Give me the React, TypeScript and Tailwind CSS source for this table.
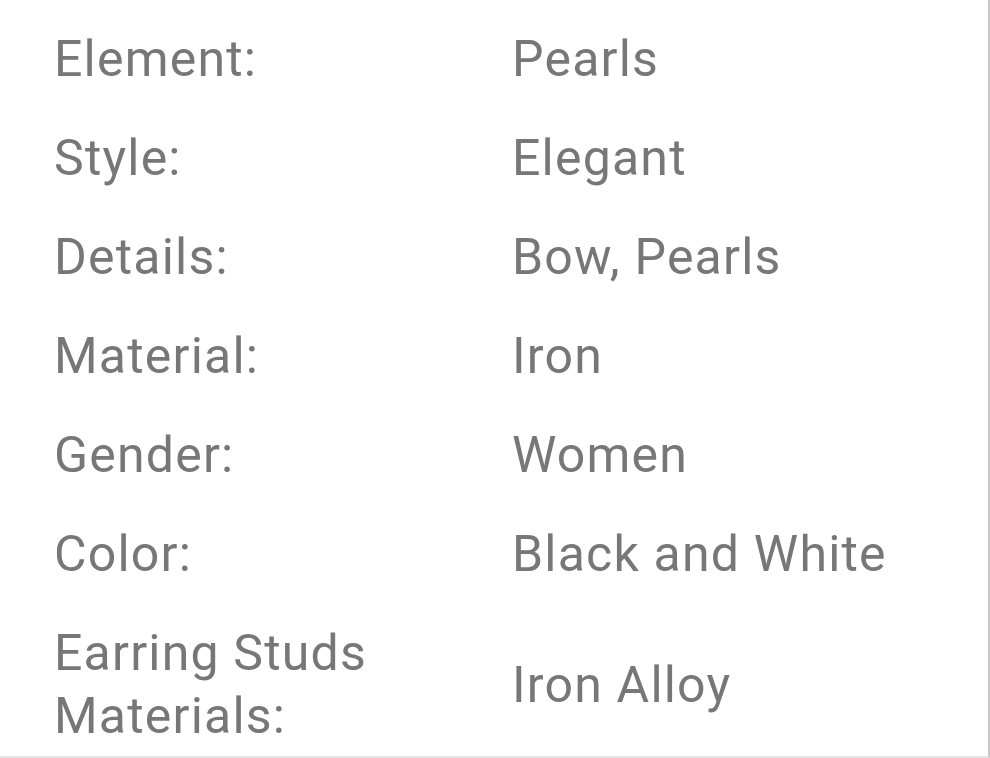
const rows: [string, string][] = [
  ["Element:", "Pearls"],
  ["Style:", "Elegant"],
  ["Details:", "Bow, Pearls"],
  ["Material:", "Iron"],
  ["Gender:", "Women"],
  ["Color:", "Black and White"],
  ["Earring Studs Materials:", "Iron Alloy"],
];

export default function App() {
  return (
    <div
      className="h-[758px] w-[990px] overflow-hidden bg-white border-r-2 border-b-2 border-r-[#c6c6c6] border-b-[#e4e4e4]"
      style={{ fontFamily: "Roboto, 'Liberation Sans', sans-serif" }}
    >
      <div className="pt-[10px] pl-[54px]">
        {rows.map(([label, value]) => (
          <div
            key={label}
            className="grid grid-cols-[458px_1fr] items-center py-[18px] text-[50px] leading-[63px] tracking-[1.2px] text-[#777777]"
          >
            <div className="w-[340px]">{label}</div>
            <div>{value}</div>
          </div>
        ))}
      </div>
    </div>
  );
}
